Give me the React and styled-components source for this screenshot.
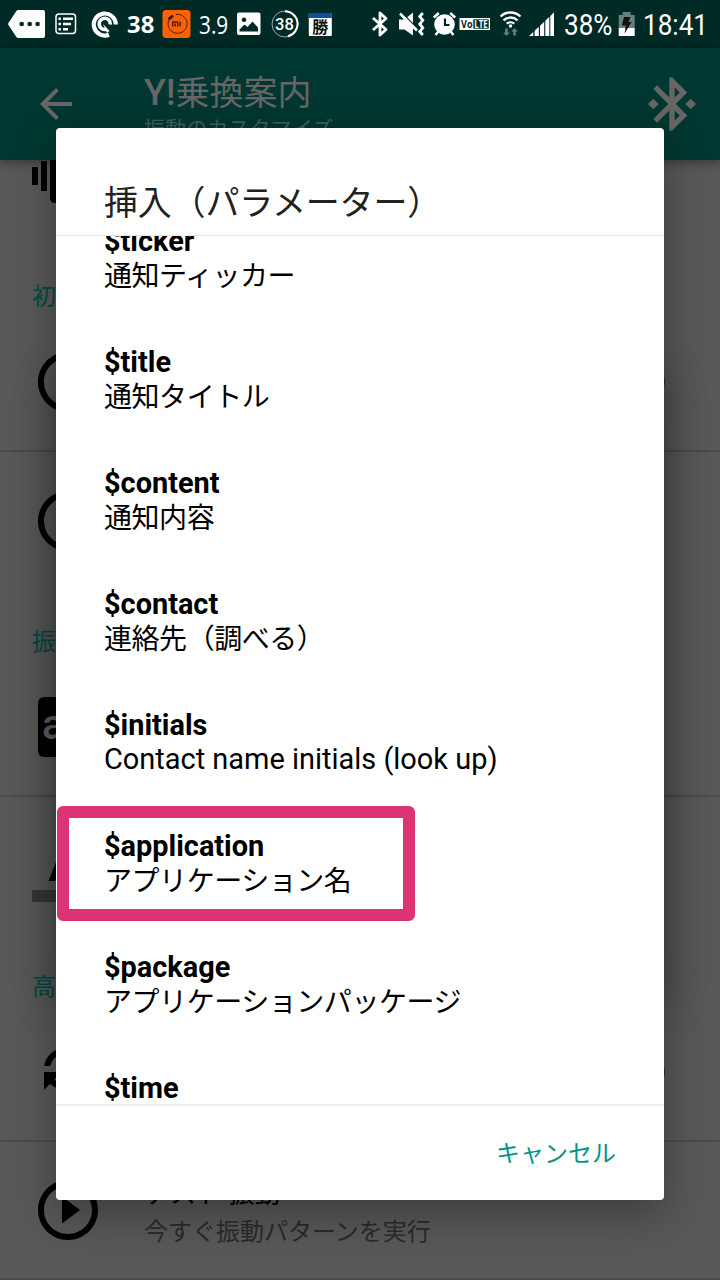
import React from "react";
import styled, { createGlobalStyle } from "styled-components";

const GlobalStyle = createGlobalStyle`
  * {
    box-sizing: border-box;
  }
  body {
    margin: 0;
    background: #585858;
    font-family: Roboto, "Noto Sans CJK JP", sans-serif;
  }
`;

const Screen = styled.div`
  position: relative;
  width: 720px;
  height: 1280px;
  overflow: hidden;
  display: flex;
  flex-direction: column;
  background: #585858;
`;

/* status bar */
const StatusBar = styled.div`
  height: 48px;
  flex: none;
  display: flex;
  align-items: center;
  background: #002a25;
  color: #fff;
`;
const StatusIcon = styled.svg`
  display: block;
  flex: none;
  height: 48px;
  width: ${(p) => p.$w}px;
  margin-left: ${(p) => p.$gap || 0}px;
`;
const StatusText = styled.span`
  flex: none;
  width: ${(p) => p.$w}px;
  margin-left: ${(p) => p.$gap || 0}px;
  font-family: ${(p) => p.$font || "Roboto"}, sans-serif;
  font-size: ${(p) => p.$size}px;
  font-weight: ${(p) => p.$weight || 400};
  line-height: 48px;
  white-space: nowrap;
  transform: translateY(${(p) => p.$drop || 0}px) scaleX(${(p) => p.$stretch || 1});
  transform-origin: left center;
`;

/* app bar */
const AppBar = styled.header`
  height: 112px;
  flex: none;
  display: flex;
  align-items: center;
  padding: 0 16px 0 32px;
  background: #003730;
  color: #666;
  box-shadow: 0 2px 10px rgba(0, 0, 0, 0.4);
  z-index: 1;
`;
const BarIcon = styled.svg`
  width: ${(p) => p.$size}px;
  height: ${(p) => p.$size}px;
  fill: currentColor;
`;
const BarTitles = styled.div`
  flex: 1;
  align-self: flex-start;
  padding: 24px 0 0 64px;
`;
const BarTitle = styled.div`
  font-size: 34px;
  line-height: 42px;
  font-weight: 400;
`;
const BarLatin = styled.span`
  font-size: 36px;
  font-weight: 500;
`;
const BarSubtitle = styled.div`
  font-size: 21px;
  line-height: 31px;
  letter-spacing: 0.1px;
  color: #41605b;
`;

/* settings behind the dialog */
const Settings = styled.main`
  flex: 1;
  min-height: 0;
  overflow: hidden;
`;
const SettingsScroll = styled.div`
  margin-top: -53px;
`;
const Category = styled.div`
  height: ${(p) => p.$h || 69}px;
  padding: 34px 0 0 32px;
  font-size: 24px;
  line-height: 36px;
  color: #004a42;
`;
const Row = styled.div`
  height: ${(p) => p.$h || 138}px;
  display: flex;
  align-items: center;
  padding: 0 55px 0 32px;
  border-bottom: ${(p) => (p.$line ? "2px solid #4b4b4b" : "0")};
`;
const RowIcon = styled.svg`
  width: 72px;
  height: 72px;
  flex: none;
  fill: #000;
  font-family: Roboto, sans-serif;
`;
const RowTexts = styled.div`
  flex: 1;
  padding: 4px 0 0 40px;
`;
const RowTitle = styled.div`
  font-size: 26px;
  line-height: 36px;
  color: #000;
`;
const RowHint = styled.div`
  margin-top: 4px;
  font-size: 24px;
  line-height: 32px;
  color: #2a2a2a;
`;
const RowKnob = styled.span`
  width: 24px;
  height: 24px;
  border-radius: 50%;
  background: #2b2b2b;
`;

/* dialog */
const Overlay = styled.div`
  position: absolute;
  inset: 0;
  padding: 128px 56px 80px;
  display: flex;
  z-index: 2;
`;
const Dialog = styled.section`
  position: relative;
  flex: 1;
  display: flex;
  flex-direction: column;
  border-radius: 4px;
  background: #fff;
  box-shadow: 0 14px 44px rgba(0, 0, 0, 0.32);
  z-index: 0;
`;
/* second, softer shadow around the middle of the dialog */
const Glow = styled.div`
  position: absolute;
  inset: 376px 56px 276px;
  box-shadow: 0 0 40px rgba(0, 0, 0, 0.3);
`;
const DialogTitle = styled.h1`
  margin: 0;
  height: 108px;
  flex: none;
  padding: 49px 48px 0;
  border-bottom: 1px solid #e6e6e6;
  font-size: 34px;
  line-height: 52px;
  font-weight: 400;
  letter-spacing: -0.2px;
  color: #212121;
`;
const List = styled.ul`
  flex: 1;
  min-height: 0;
  margin: 0;
  padding: 0;
  overflow: hidden;
  list-style: none;
`;
const Item = styled.li`
  position: relative;
  height: 121px;
  padding-left: 48px;
  font-size: 28.9px;
  line-height: 34px;
  color: #000;

  &:first-child {
    margin-top: -12px;
  }
`;
const Param = styled.div`
  font-weight: 700;
`;
const Label = styled.div`
  font-size: ${(p) => (p.$latin ? 28.95 : 28)}px;
  letter-spacing: ${(p) => (p.$latin ? 0 : -0.45)}px;
  padding-top: ${(p) => (p.$latin ? 0 : 2)}px;
`;
const Marker = styled.span`
  position: absolute;
  left: 1px;
  top: -23px;
  width: 358px;
  height: 115px;
  border: 12px solid #dc3375;
  border-radius: 6px;
`;
const Actions = styled.footer`
  height: 96px;
  flex: none;
  display: flex;
  justify-content: flex-end;
  align-items: center;
  padding: 0 48px 4px 0;
  border-top: 2px solid #eee;
`;
const Cancel = styled.button`
  border: 0;
  padding: 0;
  background: none;
  font: 400 24px Roboto, "Noto Sans CJK JP", sans-serif;
  color: #009688;
`;

const params = [
  { name: "$ticker", label: "通知ティッカー" },
  { name: "$title", label: "通知タイトル" },
  { name: "$content", label: "通知内容" },
  { name: "$contact", label: "連絡先（調べる）" },
  { name: "$initials", label: "Contact name initials (look up)", latin: true },
  { name: "$application", label: "アプリケーション名", marked: true },
  { name: "$package", label: "アプリケーションパッケージ" },
  { name: "$time", label: "" },
];

const ring =
  "M12 2C6.48 2 2 6.48 2 12s4.48 10 10 10 10-4.48 10-10S17.52 2 12 2zm0 18c-4.41 0-8-3.59-8-8s3.59-8 8-8 8 3.59 8 8-3.59 8-8 8z";

function Status() {
  return (
    <StatusBar>
      <StatusIcon $w={38} $gap={8} viewBox="8 0 38 48">
        <path
          d="M18.5 10H43a2 2 0 0 1 2 2v24a2 2 0 0 1-2 2H18.500q-1.500 0-2.300-1.300L8.600 25.300q-.8-1.300 0-2.600l7.600-11.400Q17 10 18.500 10z"
          fill="#fff"
        />
        <g fill="#002a25">
          <circle cx="21.700" cy="24" r="2.300" />
          <circle cx="29.700" cy="24" r="2.300" />
          <circle cx="37.600" cy="24" r="2.300" />
        </g>
      </StatusIcon>
      <StatusIcon $w={22} $gap={9} viewBox="55 0 22 48">
        <rect x="56" y="14" width="19.500" height="19.500" rx="3" fill="none" stroke="#fff" strokeWidth="1.500" />
        <path d="M63 18.700h10M63 24h8M63 29.300h5" stroke="#fff" strokeWidth="2.400" />
        <path d="M58.500 18.700h2.400M58.500 24h2.400M58.500 29.300h2.400" stroke="#fff" strokeWidth="2.400" />
      </StatusIcon>
      <StatusIcon $w={28} $gap={14} viewBox="91 0 28 48">
        <g fill="none" stroke="#fff">
          <path d="M109 34.700A11 11 0 1 1 115.800 24.500" strokeWidth="4.200" />
          <path d="M106.500 29.200A5.600 5.600 0 1 1 110.300 24.500" strokeWidth="3.600" />
        </g>
        <path d="M103 24l6.500 7-2.500 2z" fill="#fff" />
      </StatusIcon>
      <StatusText $w={27} $gap={8} $size={22.5} $weight={700} $font='"Open Sans"' $stretch={1.06} $drop={0.5}>
        38
      </StatusText>
      <StatusIcon $w={29} $gap={8} viewBox="162 0 29 48">
        <rect x="162.500" y="10" width="28" height="28" rx="3.500" fill="#ff6100" />
        <path d="M171 17a9.500 9.500 0 1 0 5-2.500" fill="none" stroke="#4a2410" strokeWidth="1" />
        <path d="M168.500 19.500l4.500-4" stroke="#2a1c18" strokeWidth="2.600" />
        <path d="M172.800 26.500v-4.500h3.700q1.300 0 1.300 1.300v3.200M175.300 26.500v-3M180 21.500v5" fill="none" stroke="#3a1d10" strokeWidth="1.400" />
      </StatusIcon>
      <StatusText $w={30} $gap={7.5} $size={26} $font='"Open Sans"' $stretch={0.8}>
        3.9
      </StatusText>
      <StatusIcon $w={24} $gap={8.5} viewBox="237 0 24 48">
        <path
          fillRule="evenodd"
          d="M239 12.500h19.500a2 2 0 0 1 2 2V33a2 2 0 0 1-2 2H239a2 2 0 0 1-2-2V14.500a2 2 0 0 1 2-2zM239.500 31.500h18.500v-4l-5.500-6-5 5.500-3-2.500-5 5zM244 17.500a2.300 2.300 0 1 0 .01 0z"
          fill="#fff"
        />
      </StatusIcon>
      <StatusIcon $w={28} $gap={10} viewBox="271 0 28 48">
        <circle cx="285" cy="24" r="13" fill="none" stroke="#9aacaa" strokeWidth="1" />
        <path d="M285 11.300a12.700 12.700 0 0 1 3 25" fill="none" stroke="#fff" strokeWidth="2" />
        <text x="284.500" y="30" textAnchor="middle" fill="#fff" fontFamily="Roboto, sans-serif" fontWeight="500" fontSize="16.500">
          38
        </text>
      </StatusIcon>
      <StatusIcon $w={24} $gap={9} viewBox="308 0 24 48">
        <rect x="308.800" y="13" width="23" height="23" rx="1" fill="#fff" />
        <rect x="308.800" y="13" width="23" height="5" fill="#0b4ea2" />
        <text x="320.300" y="33" textAnchor="middle" fill="#111" fontFamily="Noto Sans CJK JP, sans-serif" fontWeight="700" fontSize="16">
          勝
        </text>
      </StatusIcon>
      <StatusIcon $w={18} $gap={39} viewBox="371 0 18 48">
        <path d="M373 18l13 11.500-6 5.500V13l6 5.500L373 30" fill="none" stroke="#fff" strokeWidth="2.800" strokeLinejoin="round" />
      </StatusIcon>
      <StatusIcon $w={28} $gap={9} viewBox="398 0 28 48">
        <path d="M399 19.500h5.500l8.500-7v23l-8.500-6H399z" fill="#fff" />
        <path d="M401.500 13l16.500 16.500" stroke="#002a25" strokeWidth="2" />
        <path d="M400 13.500l17 17" stroke="#fff" strokeWidth="2.600" />
        <path d="M422.800 13l-3 3.500 3 3.800-3 3.700 3 3.800-3 3.700 3 3.500" fill="none" stroke="#fff" strokeWidth="2.800" />
      </StatusIcon>
      <StatusIcon $w={24} $gap={7} viewBox="433 0 24 48">
        <circle cx="444.500" cy="24.500" r="10.300" fill="#fff" />
        <path d="M433.800 17.500l5-4.500M455.200 17.500l-5-4.500M438 32l-2.500 3M451 32l2.500 3" stroke="#fff" strokeWidth="2.400" />
        <path d="M445 18.500V25h4.500" fill="none" stroke="#002a25" strokeWidth="2.200" />
      </StatusIcon>
      <StatusIcon $w={32} $gap={2} viewBox="459 0 32 48">
        <rect x="459.500" y="18" width="30.500" height="12" fill="#fff" />
        <rect x="473.300" y="19.300" width="15.400" height="9.400" fill="#002a25" />
        <g fontFamily="Open Sans, sans-serif" fontWeight="700" fontSize="10.500">
          <text x="461" y="27.800" fill="#002a25" textLength="11.500" lengthAdjust="spacingAndGlyphs">
            Vo
          </text>
          <text x="474.300" y="27.800" fill="#fff" textLength="13.500" lengthAdjust="spacingAndGlyphs">
            LTE
          </text>
        </g>
      </StatusIcon>
      <StatusIcon $w={22} $gap={9} viewBox="500 0 22 48">
        <g fill="none" stroke="#fff" strokeWidth="2.300">
          <path d="M500.500 16.500a14.500 14.500 0 0 1 20 0" />
          <path d="M503.500 20.300a10.200 10.200 0 0 1 14 0" />
          <path d="M506.700 23.700a5.800 5.800 0 0 1 7.600 0" />
        </g>
        <circle cx="510.500" cy="26" r="1.700" fill="#fff" />
        <path d="M505.200 28.500h2.600v4h2l-3.300 3.500-3.300-3.500h2zM513.200 35.500h2.600v-4h2l-3.300-3.500-3.300 3.500h2z" fill="#66807c" />
      </StatusIcon>
      <StatusIcon $w={26} $gap={7} viewBox="529 0 26 48">
        <path d="M529 36l4.300-4V36zM534.600 36v-5.200l4.200-4v9.200zM540 36V25.800l4.200-4V36zM545.300 36V20.800l4-4V36zM550.300 36V16l3.700-3.700V36z" fill="#fff" />
      </StatusIcon>
      <StatusText $w={49} $gap={8.5} $size={30} $stretch={0.87} $drop={1}>
        38%
      </StatusText>
      <StatusIcon $w={17} $gap={5.5} viewBox="618 0 17 48">
        <path d="M618.700 15h4v-3h8v3h4v13h-16z" fill="#66807c" />
        <path d="M618.700 28h16v8h-16z" fill="#fff" />
        <path d="M624 17h6.500l-2 5h3.200l-7.200 11.500 1.300-8h-4z" fill="#111" />
      </StatusIcon>
      <StatusText $w={66} $gap={8} $size={30} $stretch={0.87} $drop={1}>
        18:41
      </StatusText>
    </StatusBar>
  );
}

function Background() {
  return (
    <Settings>
      <SettingsScroll>
        <Row>
          <RowIcon viewBox="0 0 24 24">
            <path d="M0 15h2V9H0v6zm3 2h2V7H3v10zm19-8v6h2V9h-2zm-3 8h2V7h-2v10zM16.500 3h-9C6.670 3 6 3.670 6 4.500v15c0 .83.67 1.500 1.500 1.500h9c.83 0 1.500-.67 1.500-1.500v-15c0-.83-.67-1.500-1.500-1.500zM16 19H8V5h8v14z" />
          </RowIcon>
        </Row>
        <Category $h={68}>初</Category>
        <Row $line $h={139}>
          <RowIcon viewBox="0 0 24 24">
            <path d={ring} />
          </RowIcon>
          <RowTexts />
          <RowKnob />
        </Row>
        <Row>
          <RowIcon viewBox="0 0 24 24">
            <path d={ring} />
          </RowIcon>
        </Row>
        <Category>振</Category>
        <Row $line>
          <RowIcon viewBox="0 0 72 72">
            <rect x="6" y="6" width="60" height="60" rx="6" />
            <text x="10" y="47.500" fontSize="42" fontWeight="500" fill="#626262">
              a
            </text>
          </RowIcon>
        </Row>
        <Row>
          <RowIcon viewBox="0 0 24 24">
            <path d="M0 20h24v4H0z" fill="#363636" />
            <path d="M11 3L5.500 17h2.250l1.120-3h6.250l1.120 3h2.250L13 3h-2zm-1.380 9L12 5.670 14.380 12H9.620z" />
          </RowIcon>
        </Row>
        <Category>高</Category>
        <Row $line>
          <RowIcon viewBox="0 0 24 24">
            <path d="M11 6c1.380 0 2.630.56 3.540 1.460L12 10h6V4l-2.050 2.050C14.680 4.780 12.930 4 11 4c-3.530 0-6.430 2.610-6.920 6H6.100c.46-2.280 2.480-4 4.900-4zM4 12v6l2.050-2.050C7.320 17.220 9.070 18 11 18v-2c-1.380 0-2.630-.56-3.540-1.460L10 12H4z" />
          </RowIcon>
          <RowTexts />
          <RowKnob />
        </Row>
        <Row $line>
          <RowIcon viewBox="0 0 24 24">
            <path d={ring} />
            <path d="M10 16.500l6-4.500-6-4.500v9z" />
          </RowIcon>
          <RowTexts>
            <RowTitle>テスト 振動</RowTitle>
            <RowHint>今すぐ振動パターンを実行</RowHint>
          </RowTexts>
        </Row>
      </SettingsScroll>
    </Settings>
  );
}

export default function App() {
  return (
    <>
      <GlobalStyle />
      <Screen>
        <Status />
        <AppBar>
          <BarIcon $size={48} viewBox="0 0 24 24">
            <path d="M20 11H7.830l5.590-5.590L12 4l-8 8 8 8 1.410-1.410L7.830 13H20v-2z" />
          </BarIcon>
          <BarTitles>
            <BarTitle>
              <BarLatin>Y!</BarLatin>乗換案内
            </BarTitle>
            <BarSubtitle>振動のカスタマイズ</BarSubtitle>
          </BarTitles>
          <BarIcon $size={64} viewBox="0 0 24 24">
            <path d="M7 12l-2-2-2 2 2 2 2-2zm10.710-4.290L12 2h-1v7.590L6.410 5 5 6.410 10.590 12 5 17.590 6.410 19 11 14.410V22h1l5.710-5.710-4.300-4.290 4.300-4.290zM13 5.830l1.880 1.880L13 9.590V5.830zm1.880 10.460L13 18.170v-3.760l1.880 1.880zM19 10l-2 2 2 2 2-2-2-2z" />
          </BarIcon>
        </AppBar>
        <Background />
        <Overlay>
          <Glow />
          <Dialog>
            <DialogTitle>挿入（パラメーター）</DialogTitle>
            <List>
              {params.map((p) => (
                <Item key={p.name}>
                  <Param>{p.name}</Param>
                  <Label $latin={p.latin}>{p.label}</Label>
                  {p.marked && <Marker />}
                </Item>
              ))}
            </List>
            <Actions>
              <Cancel>キャンセル</Cancel>
            </Actions>
          </Dialog>
        </Overlay>
      </Screen>
    </>
  );
}
